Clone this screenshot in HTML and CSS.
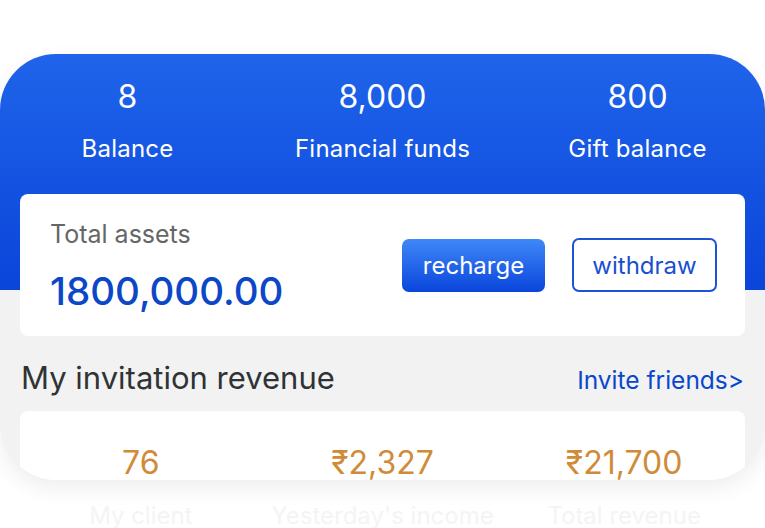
FILE: index.html
```html
<!DOCTYPE html>
<html lang="en">
<head>
<meta charset="utf-8">
<title>Assets</title>
<link rel="stylesheet" href="styles.css">
</head>
<body>
<main class="panel">
  <section class="stats">
    <div class="stat"><div class="stat-value">8</div><div class="stat-label">Balance</div></div>
    <div class="stat"><div class="stat-value">8,000</div><div class="stat-label">Financial funds</div></div>
    <div class="stat"><div class="stat-value">800</div><div class="stat-label">Gift balance</div></div>
  </section>
  <section class="assets">
    <div class="assets-info">
      <div class="assets-title">Total assets</div>
      <div class="assets-amount">1800,000.00</div>
    </div>
    <div class="assets-actions">
      <button class="btn btn-primary">recharge</button>
      <button class="btn btn-outline">withdraw</button>
    </div>
  </section>
  <div class="section-head">
    <h2 class="section-title">My invitation revenue</h2>
    <a class="section-link">Invite friends&gt;</a>
  </div>
  <section class="revenue">
    <div class="rev-value">76</div>
    <div class="rev-value">₹2,327</div>
    <div class="rev-value">₹21,700</div>
  </section>
</main>
<div class="rev-labels">
  <div class="rev-label">My client</div>
  <div class="rev-label">Yesterday's income</div>
  <div class="rev-label">Total revenue</div>
</div>
</body>
</html>
```
FILE: styles.css
```css
* { box-sizing: border-box; }
html, body { margin: 0; padding: 0; background: #ffffff; }
body {
  font-family: "Inter", "Liberation Sans", sans-serif;
  width: 765px;
  height: 528px;
  overflow: hidden;
}
.panel {
  margin-top: 54px;
  height: 426px;
  border-radius: 56px;
  overflow: hidden;
  background: linear-gradient(180deg, #1f64ea 0%, #0a45da 100%) top left / 100% 236px no-repeat, #f2f2f2;
  box-shadow: 0 8px 22px rgba(0, 0, 0, 0.07);
  display: flex;
  flex-direction: column;
}
.stats {
  flex-shrink: 0;
  display: grid;
  grid-template-columns: repeat(3, 1fr);
  padding-top: 23px;
  color: #ffffff;
  text-align: center;
}
.stat-value {
  font-size: 32px;
  line-height: 40px;
}
.stat-label {
  margin-top: 17px;
  font-size: 24px;
  line-height: 30px;
  letter-spacing: 0.2px;
}
.assets {
  flex-shrink: 0;
  margin: 30px 20px 0;
  height: 142px;
  background: #ffffff;
  border-radius: 8px;
  display: flex;
  align-items: center;
  justify-content: space-between;
  padding: 0 28px 0 30px;
}
.assets-info { display: flex; flex-direction: column; padding-top: 2px; }
.assets-title {
  font-size: 25px;
  line-height: 30px;
  color: #666666;
}
.assets-amount {
  margin-top: 19px;
  font-size: 38.5px;
  line-height: 46px;
  color: #0b47c7;
  font-weight: 500;
}
.assets-actions { display: flex; gap: 27px; align-items: center; }
.btn {
  font-family: inherit;
  font-size: 24px;
  height: 54px;
  border-radius: 7px;
  padding: 0;
  cursor: pointer;
}
.btn-primary {
  width: 143px;
  height: 53px;
  border: none;
  color: #ffffff;
  background: linear-gradient(180deg, #3f88f8 0%, #0a45db 100%);
}
.btn-outline {
  width: 145px;
  border: 2px solid #1b55d6;
  color: #1a4fd0;
  background: #ffffff;
}
.section-head {
  flex-shrink: 0;
  display: flex;
  justify-content: space-between;
  align-items: baseline;
  padding: 0 21px;
  margin-top: 24px;
}
.section-title {
  margin: 0;
  font-size: 31px;
  line-height: 36px;
  font-weight: 400;
  color: #303336;
}
.section-link {
  font-size: 24.5px;
  color: #0a47cc;
}
.revenue {
  margin: 15px 20px 0;
  background: #ffffff;
  border-radius: 8px;
  flex: 1 0 auto;
  display: grid;
  grid-template-columns: repeat(3, 1fr);
  text-align: center;
  padding-top: 36px;
}
.rev-value {
  font-size: 32px;
  line-height: 32px;
  color: #d08b39;
}
.rev-labels {
  display: grid;
  grid-template-columns: repeat(3, 1fr);
  padding: 0 20px;
  margin-top: 24px;
  text-align: center;
}
.rev-label {
  font-size: 24px;
  line-height: 24px;
  color: #f4f4f4;
}
```
